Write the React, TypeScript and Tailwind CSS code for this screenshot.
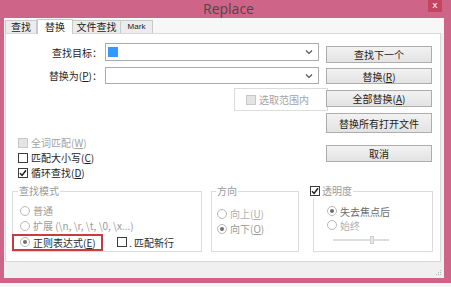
import React from 'react';

const cjk = "font-['Noto_Sans_CJK_SC','Noto_Sans',sans-serif]";

function Check({ checked, disabled }: { checked?: boolean; disabled?: boolean }) {
  return (
    <span
      className={`w-[10px] h-[10px] border flex items-center justify-center shrink-0 ${
        disabled ? 'border-[#c8c8c8] bg-[#e4e4e4]' : 'border-[#3a3a3a] bg-white'
      }`}
    >
      {checked && (
        <svg width="8" height="8" viewBox="0 0 8 8">
          <path d="M1 4.2 L3.1 6.4 L7 1.2" stroke="#1e1e1e" strokeWidth="1.5" fill="none" />
        </svg>
      )}
    </span>
  );
}

function Radio({ checked }: { checked?: boolean }) {
  return (
    <span className="w-[10px] h-[10px] rounded-full border border-[#b8b8b8] bg-white flex items-center justify-center shrink-0">
      {checked && <span className="w-[4px] h-[4px] rounded-full bg-[#6e6e6e]" />}
    </span>
  );
}

function Combo({ h }: { h: string }) {
  return (
    <div className={`ml-[3px] w-[214px] ${h} bg-white border border-[#acacac] flex items-center`}>
      <div className="flex-1" />
      <svg width="8" height="6" viewBox="0 0 8 6" className="mr-[5px]">
        <path d="M1 1.5 L4 4.5 L7 1.5" stroke="#555" strokeWidth="1.2" fill="none" />
      </svg>
    </div>
  );
}

export default function App() {
  const btn =
    'w-[106px] flex items-center justify-center border border-[#adadad] bg-gradient-to-b from-[#f2f2f2] to-[#e3e3e3] text-[10px] text-[#222]';

  return (
    <div className={`w-[451px] h-[287px] bg-[#f6f6f6] ${cjk}`}>
      <div className="w-[451px] h-[283px] bg-[#cf6489] flex flex-col">
        {/* title bar */}
        <div className="h-[18px] flex items-start relative">
          <div className="flex-1 text-center text-[14px] leading-[18px] text-[#4a4a4a] font-['Open_Sans',sans-serif] pl-[6px]">
            Replace
          </div>
          <div className="absolute right-[9px] top-0 w-[14px] h-[12px] bg-[#c54462] text-white text-[9px] leading-[11px] text-center font-['DejaVu_Sans',sans-serif]">
            x
          </div>
        </div>

        {/* client */}
        <div className="ml-[4px] w-[440px] h-[260px] bg-[#f0f0f0] flex flex-col relative">
          {/* tabs */}
          <div className="h-[15px] flex items-end pl-[1px] bg-[#f7f7f7]">
            <div className="w-[32px] h-[13px] border border-b-0 border-[#c9c9c9] bg-[#ececec] text-[10px] leading-[12px] text-center text-[#222]">
              查找
            </div>
            <div className="w-[36px] h-[15px] border border-b-0 border-[#c9c9c9] bg-white text-[10px] leading-[13px] text-center text-[#222] -mb-[1px] relative">
              替换
            </div>
            <div className="w-[48px] h-[13px] border border-b-0 border-l-0 border-[#c9c9c9] bg-[#ececec] text-[10px] leading-[12px] text-center text-[#222]">
              文件查找
            </div>
            <div className="w-[32px] h-[13px] border border-b-0 border-l-0 border-[#c9c9c9] bg-[#ececec] text-[8px] leading-[12px] text-center text-[#222] font-['Liberation_Sans',sans-serif]">
              Mark
            </div>
          </div>

          {/* panel */}
          <div className="ml-[1px] w-[436px] h-[229px] bg-white border border-[#d9d9d9] flex flex-col text-[10px] text-[#1e1e1e]">
            <div className="h-[150px] flex">
              {/* left part */}
              <div className="w-[320px] flex flex-col pt-[9px]">
                <div className="flex items-center h-[18px]">
                  <div className="w-[96px] text-right">查找目标：</div>
                  <div className="ml-[3px] w-[214px] h-[18px] bg-white border border-[#acacac] flex items-center">
                    <span className="ml-[2px] w-[10px] h-[10px] bg-[#3399ff]" />
                    <div className="flex-1" />
                    <svg width="8" height="6" viewBox="0 0 8 6" className="mr-[5px]">
                      <path d="M1 1.5 L4 4.5 L7 1.5" stroke="#555" strokeWidth="1.2" fill="none" />
                    </svg>
                  </div>
                </div>
                <div className="flex items-center h-[17px] mt-[6px]">
                  <div className="w-[96px] text-right">
                    替换为(<span className="underline">P</span>)：
                  </div>
                  <Combo h="h-[17px]" />
                </div>
                <div className="ml-[228px] mt-[4px] w-[94px] h-[23px] border border-[#dcdcdc] flex items-center pl-[11px] gap-[3px] text-[#a3a3a3]">
                  <Check disabled />
                  <span>选取范围内</span>
                </div>
                <div className="mt-[24px] ml-[12px] flex flex-col">
                  <div className="h-[15px] flex items-center gap-[3px] text-[#a3a3a3]">
                    <Check disabled />
                    <span>
                      全词匹配(<span className="underline">W</span>)
                    </span>
                  </div>
                  <div className="h-[15px] flex items-center gap-[3px]">
                    <Check />
                    <span>
                      匹配大小写(<span className="underline">C</span>)
                    </span>
                  </div>
                  <div className="h-[15px] flex items-center gap-[3px]">
                    <Check checked />
                    <span>
                      循环查找(<span className="underline">D</span>)
                    </span>
                  </div>
                </div>
              </div>

              {/* buttons */}
              <div className="flex flex-col pt-[12px]">
                <div className={`${btn} h-[17px] border-[#5b9bd5] from-[#ebf4fc] to-[#dcecfc]`}>查找下一个</div>
                <div className={`${btn} h-[16px] mt-[5px]`}>
                  替换(<span className="underline">R</span>)
                </div>
                <div className={`${btn} h-[17px] mt-[6px]`}>
                  全部替换(<span className="underline">A</span>)
                </div>
                <div className={`${btn} h-[20px] mt-[6px]`}>替换所有打开文件</div>
                <div className={`${btn} h-[17px] mt-[12px]`}>取消</div>
              </div>
            </div>

            {/* group boxes */}
            <div className="flex ml-[6px] text-[#9a9a9a]">
              <fieldset className="w-[190px] h-[68px] border border-[#dcdcdc] flex flex-col">
                <legend className="ml-[5px] px-[1px] leading-[14px]">查找模式</legend>
                <div className="flex flex-col pl-[7px] pt-[5px]">
                  <div className="h-[15px] flex items-center gap-[3px]">
                    <Radio />
                    <span>普通</span>
                  </div>
                  <div className="h-[15px] flex items-center gap-[3px]">
                    <Radio />
                    <span>
                      扩展 (\n, \r, \t, \0, \x...)
                    </span>
                  </div>
                  <div className="h-[16px] mt-[1px] flex items-center -ml-[8px]">
                    <div className="w-[91px] h-[17px] border-2 border-[#c93b3f] flex items-center pl-[6px] gap-[3px] text-[#2a2a2a]">
                      <Radio checked />
                      <span>
                        正则表达式(<span className="underline">E</span>)
                      </span>
                    </div>
                    <div className="ml-[14px] flex items-center gap-[2px] text-[#2a2a2a]">
                      <Check />
                      <span>. 匹配新行</span>
                    </div>
                  </div>
                </div>
              </fieldset>

              <fieldset className="ml-[9px] w-[88px] h-[68px] border border-[#dcdcdc] flex flex-col">
                <legend className="ml-[4px] px-[1px] leading-[14px]">方向</legend>
                <div className="flex flex-col pl-[5px] pt-[8px]">
                  <div className="h-[15px] flex items-center gap-[3px] text-[#b0b0b0]">
                    <Radio />
                    <span>
                      向上(<span className="underline">U</span>)
                    </span>
                  </div>
                  <div className="h-[15px] flex items-center gap-[3px]">
                    <Radio checked />
                    <span>
                      向下(<span className="underline">O</span>)
                    </span>
                  </div>
                </div>
              </fieldset>

              <fieldset className="ml-[14px] w-[120px] h-[68px] border border-[#dcdcdc] flex flex-col">
                <legend className="-ml-[4px] pr-[1px] leading-[14px] flex items-center gap-[2px]">
                  <Check checked />
                  <span>透明度</span>
                </legend>
                <div className="flex flex-col pl-[13px] pt-[6px]">
                  <div className="h-[14px] flex items-center gap-[3px] text-[#6a6a6a]">
                    <Radio checked />
                    <span>失去焦点后</span>
                  </div>
                  <div className="h-[14px] flex items-center gap-[3px] text-[#b0b0b0]">
                    <Radio />
                    <span>始终</span>
                  </div>
                  <div className="ml-[6px] mt-[4px] w-[56px] h-[8px] flex items-center relative">
                    <div className="w-full h-[2px] bg-[#dedede]" />
                    <div className="absolute left-[37px] top-0 w-[4px] h-[8px] bg-[#e8e8e8] border border-[#d0d0d0]" />
                  </div>
                </div>
              </fieldset>
            </div>
          </div>

          {/* size grip */}
          <div className="flex-1 flex items-end justify-end pr-[2px] pb-[2px]">
            <svg width="6" height="6" viewBox="0 0 6 6">
              <rect x="4" y="0" width="1" height="1" fill="#b5b5b5" />
              <rect x="2" y="2" width="1" height="1" fill="#b5b5b5" />
              <rect x="4" y="2" width="1" height="1" fill="#b5b5b5" />
              <rect x="0" y="4" width="1" height="1" fill="#b5b5b5" />
              <rect x="2" y="4" width="1" height="1" fill="#b5b5b5" />
              <rect x="4" y="4" width="1" height="1" fill="#b5b5b5" />
            </svg>
          </div>
        </div>
      </div>
    </div>
  );
}
